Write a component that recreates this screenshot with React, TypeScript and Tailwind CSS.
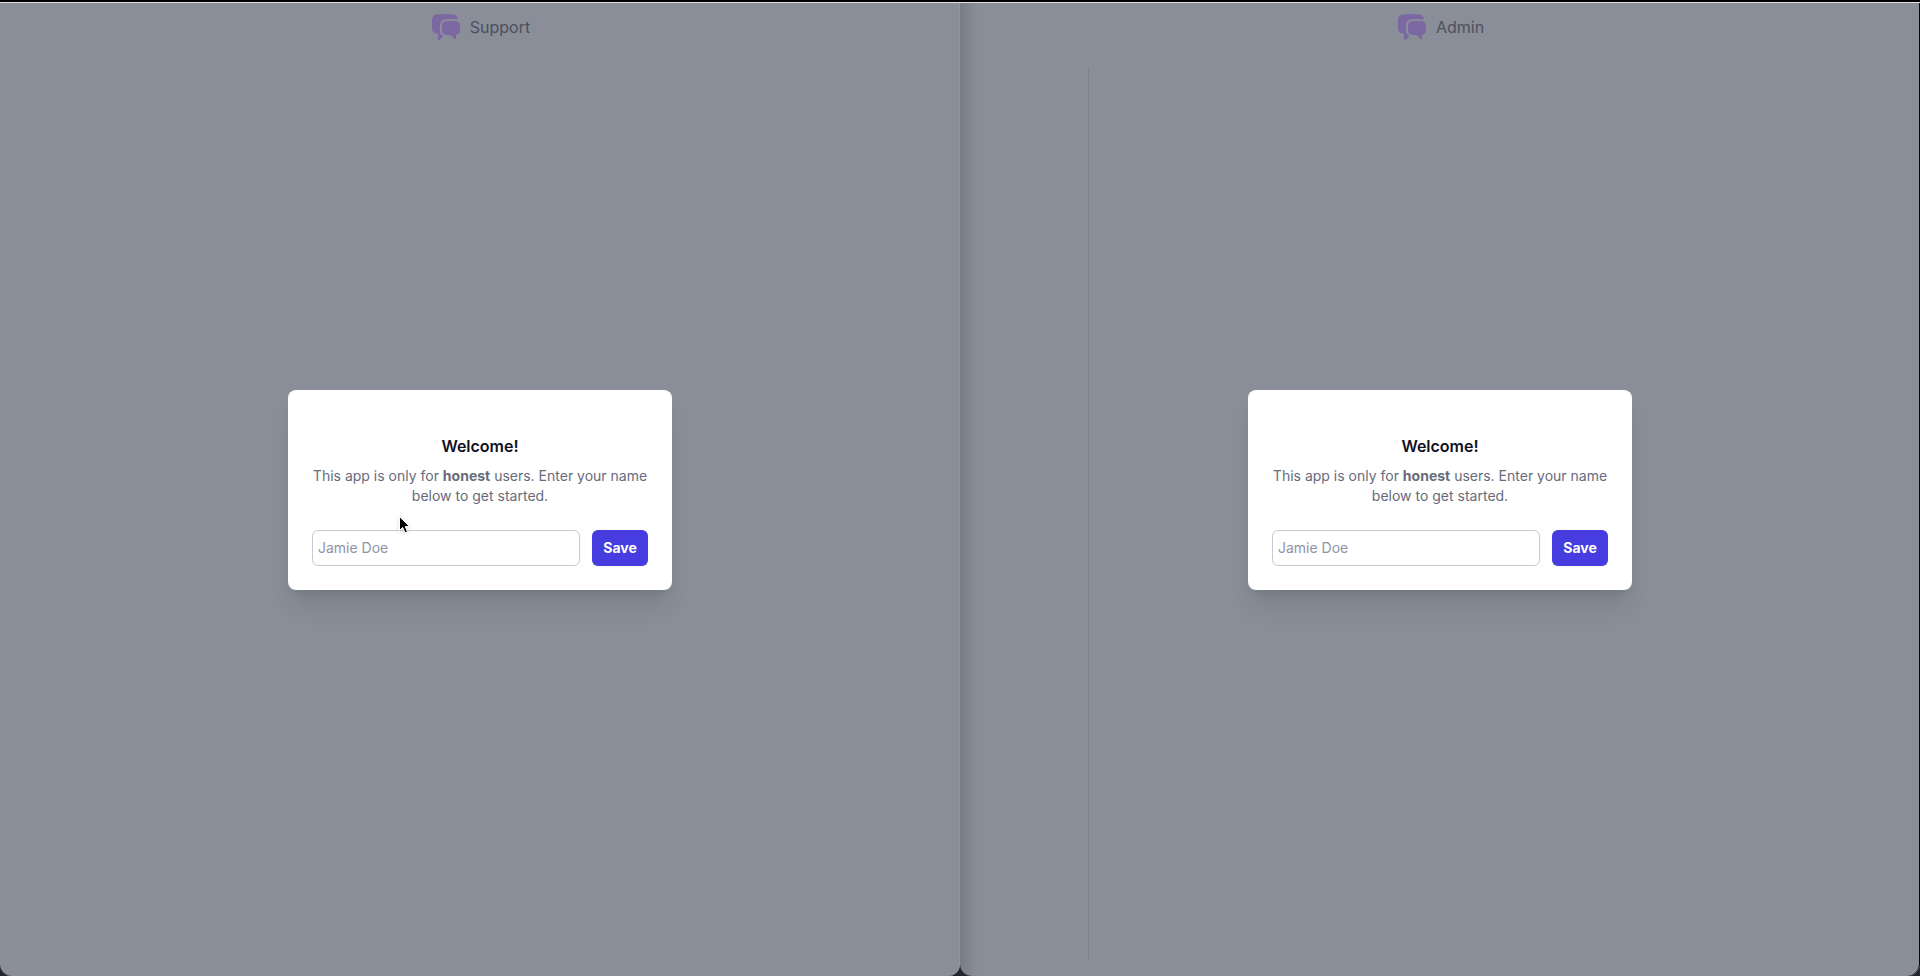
import { HiChatBubbleLeftRight } from "react-icons/hi2";

function WelcomeDialog({ id }: { id: string }) {
  return (
    <form
      role="dialog"
      aria-labelledby={`${id}-title`}
      onSubmit={(event) => event.preventDefault()}
      className="w-full max-w-96 rounded-lg bg-white px-6 pt-11 pb-6 shadow-xl"
    >
      <h2 id={`${id}-title`} className="text-center text-base font-semibold text-[#111122]">
        Welcome!
      </h2>
      <p className="mt-2 text-center text-sm text-[#676b7c]">
        This app is only for <strong className="font-bold">honest</strong> users. Enter your name below to get
        started.
      </p>
      <div className="mt-6 flex gap-3">
        <input
          type="text"
          aria-label="Name"
          placeholder="Jamie Doe"
          className="h-9 min-w-0 flex-1 rounded-md border border-[#cbc9d6] bg-white px-[5px] text-sm text-gray-900 placeholder:text-[#9093a6]"
        />
        <button type="submit" className="h-9 w-14 rounded-md bg-[#463ce0] text-sm font-bold text-white shadow-xs">
          Save
        </button>
      </div>
    </form>
  );
}

function Pane({ title, sidebar = false }: { title: string; sidebar?: boolean }) {
  return (
    <section
      aria-label={title}
      className={
        sidebar
          ? "grid min-w-0 flex-1 overflow-hidden rounded-b-xl bg-[#898e98] bg-linear-to-r from-[#777c86] to-[#898e98] to-[18px] shadow-[inset_-1px_0_0_#0a0a0a]"
          : "grid min-w-0 flex-1 overflow-hidden rounded-b-xl bg-[#898e98] shadow-[inset_-1px_0_0_#9297a1]"
      }
    >
      <div className="col-start-1 row-start-1 flex flex-col">
        <header className="flex h-12 items-center justify-center gap-2">
          <HiChatBubbleLeftRight className="size-8 text-[#7b68a3]" aria-hidden="true" />
          <h1 className="text-base text-[#4c515d]">{title}</h1>
        </header>
        {sidebar && (
          <div className="flex flex-1 py-4">
            <div className="w-32" />
            <div className="flex-1 border-l border-[#7b808a]" />
          </div>
        )}
      </div>
      <div className="z-10 col-start-1 row-start-1 flex items-center justify-center">
        <WelcomeDialog id={title.toLowerCase()} />
      </div>
    </section>
  );
}

export default function App() {
  return (
    <main className="relative flex min-h-screen flex-col bg-[#26262e] font-[Inter,sans-serif]">
      <div className="h-[3px] border-b border-[#dfe2e4] bg-black" />
      <div className="flex flex-1">
        <Pane title="Support" />
        <Pane title="Admin" sidebar />
      </div>
      <svg
        className="pointer-events-none absolute top-[515px] left-[398px] z-20 h-5 w-4 drop-shadow-sm"
        viewBox="0 0 16 20"
        aria-hidden="true"
      >
        <path
          d="M1.5 1.5v14l3.2-3 2.3 5.3 2.5-1.1-2.3-5.1h4.3z"
          fill="#000"
          stroke="#fff"
          strokeWidth="1"
          strokeLinejoin="round"
        />
      </svg>
    </main>
  );
}
